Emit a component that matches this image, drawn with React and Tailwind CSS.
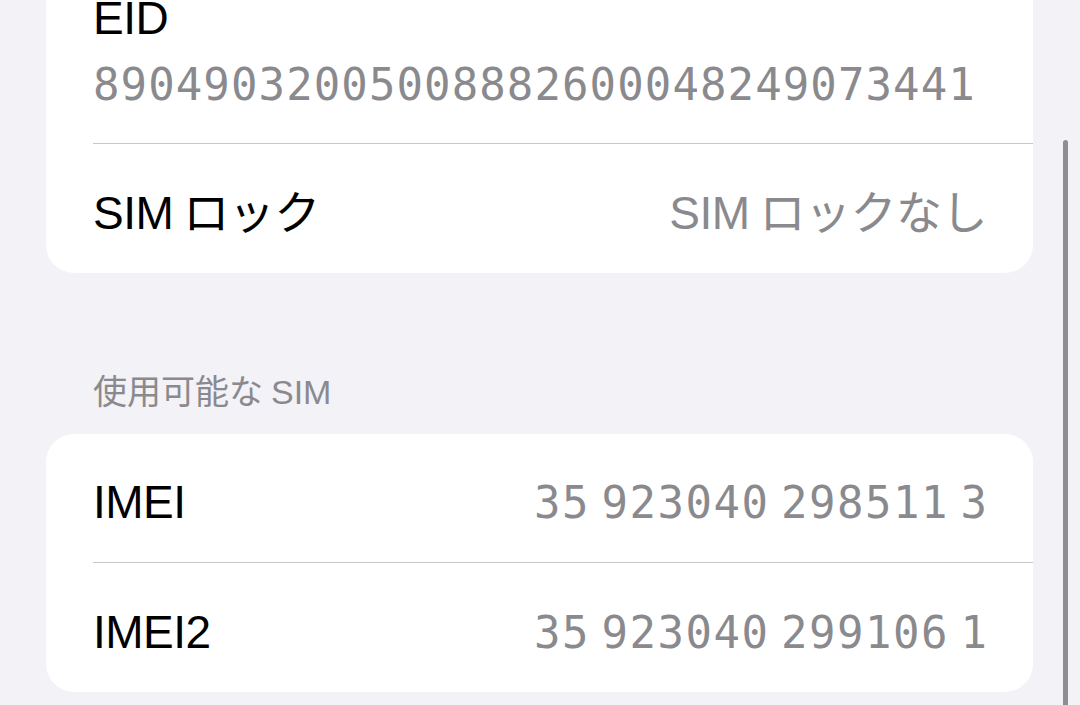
const sans = "font-['Liberation_Sans','Noto_Sans_CJK_JP',sans-serif]"
const mono = "font-['DejaVu_Sans_Mono','Liberation_Mono',monospace]"

// IMEI digits are monospaced but the group spaces are narrow
function Digits({ text }) {
  return (
    <span className={`${mono} flex gap-[13px] text-[44px] leading-[44px] tracking-[1.5px] text-[#8a8a8e]`}>
      {text.split(' ').map((g, i) => (
        <span key={i} className="-mr-[1.5px]">{g}</span>
      ))}
    </span>
  )
}

function SimLock({ className }) {
  return (
    <span className={`${sans} text-[46px] leading-[46px] tracking-[-0.5px] ${className}`}>
      SIM<span className="ml-[10px]">ロック</span>
    </span>
  )
}

function Row({ label, value, height }) {
  return (
    <div className={`${height} pl-[47px] pr-[46px] pt-[8px] flex items-center`}>
      <div className="flex w-full items-baseline justify-between">
        {typeof label === 'string' ? (
          <span className={`${sans} text-[46px] leading-[46px] tracking-[-0.5px] text-black`}>{label}</span>
        ) : (
          label
        )}
        {value}
      </div>
    </div>
  )
}

function Divider() {
  return <div className="ml-[47px] h-px bg-[#c8c7cc]" />
}

export default function App() {
  return (
    <div className="relative h-[705px] overflow-hidden bg-[#f2f2f7]">
      <div className="ml-[46px] w-[987px]">
        {/* carrier card, top is scrolled away */}
        <div className="-mt-[40px] rounded-[28px] bg-white">
          <div className="pl-[47px] pt-[35px] pb-[36px]">
            <div className={`${sans} text-[46px] leading-[46px] tracking-[-0.5px] text-black`}>EID</div>
            <div className={`${mono} mt-[22px] text-[44px] leading-[44px] tracking-[1.1px] text-[#8a8a8e]`}>
              89049032005008882600048249073441
            </div>
          </div>
          <Divider />
          <Row
            label={<SimLock className="text-black" />}
            value={
              <span className={`${sans} text-[46px] leading-[46px] tracking-[-0.5px] text-[#8a8a8e]`}>
                SIM<span className="ml-[10px]">ロックなし</span>
              </span>
            }
            height="h-[129px]"
          />
        </div>

        <div className={`${sans} mt-[102px] mb-[25px] pl-[47px] text-[34px] leading-[34px] text-[#8a8a8e]`}>
          使用可能な<span className="ml-[8px]">SIM</span>
        </div>

        <div className="rounded-[28px] bg-white">
          <Row label="IMEI" value={<Digits text="35 923040 298511 3" />} height="h-[128px]" />
          <Divider />
          <Row label="IMEI2" value={<Digits text="35 923040 299106 1" />} height="h-[129px]" />
        </div>
      </div>

      {/* scroll indicator */}
      <div className="absolute right-[12px] top-[140px] h-[600px] w-[5px] rounded-full bg-[#8e8e93]" />
    </div>
  )
}
